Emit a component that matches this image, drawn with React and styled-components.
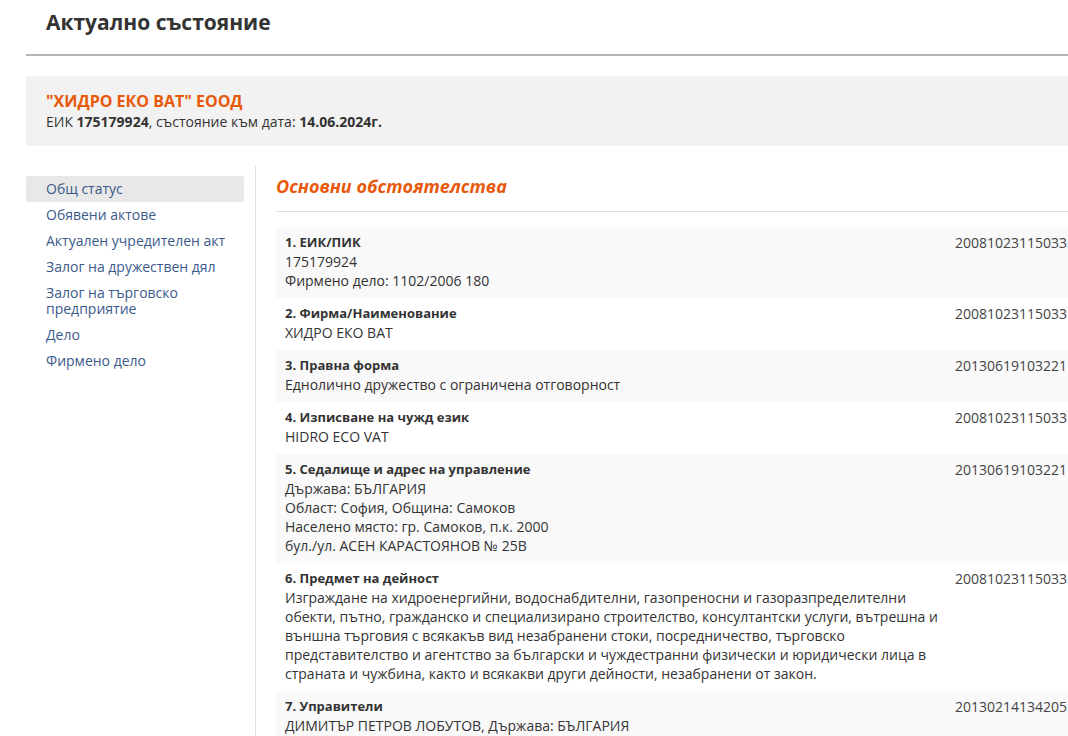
import React from "react";
import styled, { createGlobalStyle } from "styled-components";

const GlobalStyle = createGlobalStyle`
    body {
        margin: 0;
        background: #fff;
        font-family: "Open Sans", "Noto Sans", sans-serif;
        color: #333;
        overflow: hidden;
    }
`

const Page = styled.div`
    padding-left: 26px;
    width: 1042px;
`
const PageHeader = styled.div`
    height: 56px;
    border-bottom: 2px solid #b5b5b5;
    box-sizing: border-box;
`
const PageTitle = styled.h1`
    margin: 0;
    padding: 8px 0 0 20px;
    font-size: 21px;
    line-height: 28px;
    font-weight: 700;
    color: #333;
`
const CompanyBox = styled.div`
    margin-top: 20px;
    background-color: #f2f2f2;
    padding: 14px 20px 15px;
`
const CompanyName = styled.div`
    color: #e8590c;
    font-size: 16px;
    font-weight: 700;
    line-height: 22px;
`
const CompanyMeta = styled.div`
    font-size: 14px;
    line-height: 19px;
    color: #333;

    b {
        font-weight: 700;
    }
`
const Body = styled.div`
    display: flex;
    margin-top: 20px;
`
const Sidebar = styled.nav`
    width: 218px;
    padding-top: 10px;
    flex-shrink: 0;
`
const NavItem = styled.div`
    padding: 5px 8px 5px 20px;
    font-size: 14px;
    line-height: 16px;
    color: #3b5a8a;
    background-color: ${props => props.active ? "#e8e8e8" : "transparent"};
    border-radius: 2px;

    &&:hover{
        cursor: pointer;
    }
`
const Main = styled.div`
    flex: 1;
    margin-left: 11px;
    border-left: 1px solid #e0e0e0;
    padding-left: 20px;
    padding-top: 8px;
`
const SectionTitle = styled.h2`
    margin: 0;
    font-size: 18px;
    line-height: 24px;
    font-style: italic;
    font-weight: 700;
    color: #e8590c;
    padding-bottom: 13px;
    border-bottom: 1px solid #dddddd;
`
const Rows = styled.div`
    margin-top: 15px;
`
const Row = styled.div`
    display: grid;
    grid-template-columns: 1fr auto;
    column-gap: 10px;
    padding: 6px 1px 8px 9px;
    background-color: ${props => props.shaded ? "#f9f9f9" : "#fff"};
    font-size: 14px;
    line-height: 19px;
`
const RowLabel = styled.div`
    font-weight: 700;
    font-size: 13px;
    color: #333;
`
const RowText = styled.div`
    color: #333;
`
const RowDate = styled.div`
    color: #444;
    text-align: right;
`

const navItems = [
    "Общ статус",
    "Обявени актове",
    "Актуален учредителен акт",
    "Залог на дружествен дял",
    "Залог на търговско предприятие",
    "Дело",
    "Фирмено дело",
];

const rows = [
    {
        label: "1. ЕИК/ПИК",
        lines: ["175179924", "Фирмено дело: 1102/2006 180"],
        date: "20081023115033",
    },
    {
        label: "2. Фирма/Наименование",
        lines: ["ХИДРО ЕКО ВАТ"],
        date: "20081023115033",
    },
    {
        label: "3. Правна форма",
        lines: ["Еднолично дружество с ограничена отговорност"],
        date: "20130619103221",
    },
    {
        label: "4. Изписване на чужд език",
        lines: ["HIDRO ECO VAT"],
        date: "20081023115033",
    },
    {
        label: "5. Седалище и адрес на управление",
        lines: [
            "Държава: БЪЛГАРИЯ",
            "Област: София, Община: Самоков",
            "Населено място: гр. Самоков, п.к. 2000",
            "бул./ул. АСЕН КАРАСТОЯНОВ № 25В",
        ],
        date: "20130619103221",
    },
    {
        label: "6. Предмет на дейност",
        lines: [
            "Изграждане на хидроенергийни, водоснабдителни, газопреносни и газоразпределителни обекти, пътно, гражданско и специализирано строителство, консултантски услуги, вътрешна и външна търговия с всякакъв вид незабранени стоки, посредничество, търговско представителство и агентство за български и чуждестранни физически и юридически лица в страната и чужбина, както и всякакви други дейности, незабранени от закон.",
        ],
        date: "20081023115033",
    },
    {
        label: "7. Управители",
        lines: ["ДИМИТЪР ПЕТРОВ ЛОБУТОВ, Държава: БЪЛГАРИЯ"],
        date: "20130214134205",
    },
];

const App = () => {
    return (
        <Page>
            <GlobalStyle />
            <PageHeader>
                <PageTitle>Актуално състояние</PageTitle>
            </PageHeader>
            <CompanyBox>
                <CompanyName>"ХИДРО ЕКО ВАТ" ЕООД</CompanyName>
                <CompanyMeta>
                    ЕИК <b>175179924</b>, състояние към дата: <b>14.06.2024г.</b>
                </CompanyMeta>
            </CompanyBox>
            <Body>
                <Sidebar>
                    {navItems.map((item, i) => (
                        <NavItem key={item} active={i === 0}>{item}</NavItem>
                    ))}
                </Sidebar>
                <Main>
                    <SectionTitle>Основни обстоятелства</SectionTitle>
                    <Rows>
                        {rows.map((row, i) => (
                            <Row key={row.label} shaded={i % 2 === 0}>
                                <div>
                                    <RowLabel>{row.label}</RowLabel>
                                    {row.lines.map(line => (
                                        <RowText key={line}>{line}</RowText>
                                    ))}
                                </div>
                                <RowDate>{row.date}</RowDate>
                            </Row>
                        ))}
                    </Rows>
                </Main>
            </Body>
        </Page>
    );
};

export default App;
